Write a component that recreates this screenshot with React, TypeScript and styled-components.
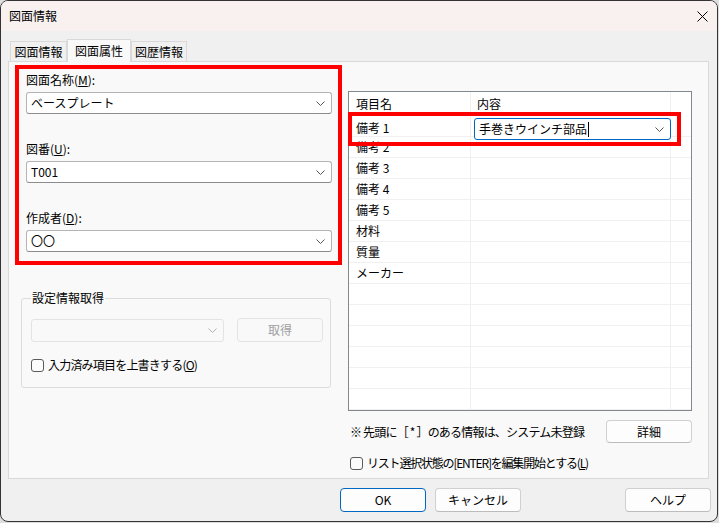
import React from 'react';
import styled, { createGlobalStyle } from 'styled-components';

const GlobalStyle = createGlobalStyle`
    html, body {
        margin: 0;
        padding: 0;
        background: #dedede;
    }
    body {
        font-family: "Noto Sans CJK JP", "Noto Sans", sans-serif;
        font-size: 12px;
        color: #000;
    }
    * {
        box-sizing: border-box;
    }
`;

const Dialog = styled.div`
    width: 718px;
    height: 522px;
    border: 1px solid #333;
    border-radius: 8px;
    background: #f0f0f0;
    overflow: hidden;
    display: flex;
    flex-direction: column;
`;

const TitleBar = styled.div`
    height: 30px;
    flex-shrink: 0;
    background: #f9f1f0;
    display: flex;
    align-items: center;
    justify-content: space-between;
    padding: 0 9px 0 8px;
    line-height: 16px;
`;

const Body = styled.div`
    padding: 8px 8px 0 7px;
    display: flex;
    flex-direction: column;
`;

const TabRow = styled.div`
    display: flex;
    align-items: flex-end;
    height: 22px;
    padding-left: 2px;
`;

const Tab = styled.div<{ $active?: boolean; $width: number }>`
    position: relative;
    z-index: ${(p) => (p.$active ? 1 : 0)};
    width: ${(p) => p.$width}px;
    height: ${(p) => (p.$active ? 23 : 20)}px;
    margin-bottom: ${(p) => (p.$active ? -1 : 0)}px;
    border: 1px solid #d9d9d9;
    border-bottom: none;
    background: ${(p) => (p.$active ? '#f9f9f9' : '#f0f0f0')};
    display: flex;
    align-items: center;
    justify-content: center;
    line-height: 16px;
    padding-top: ${(p) => (p.$active ? 0 : 1)}px;
`;

const Panel = styled.div`
    height: 418px;
    border: 1px solid #d9d9d9;
    background: #f9f9f9;
    display: flex;
    padding: 3px 0 0 6px;
`;

const LeftColumn = styled.div`
    width: 327px;
    display: flex;
    flex-direction: column;
`;

const RedFrame = styled.div`
    border: 4px solid #ff0000;
    padding: 3px 6px 9px 7px;
    display: flex;
    flex-direction: column;
    gap: 27px;
`;

const Field = styled.div`
    display: flex;
    flex-direction: column;
`;

const FieldLabel = styled.div`
    line-height: 16px;
    height: 16px;
    margin-bottom: 4px;
`;

const Combo = styled.div<{ $disabled?: boolean; $focused?: boolean; $width?: number; $height?: number }>`
    position: relative;
    z-index: 1;
    width: ${(p) => (p.$width ? `${p.$width}px` : '100%')};
    height: ${(p) => p.$height ?? 22}px;
    flex-shrink: 0;
    border: 1px solid ${(p) => (p.$focused ? '#0067c0' : p.$disabled ? '#e3e3e3' : '#b4b4b4')};
    border-bottom-color: ${(p) => (p.$focused ? '#0067c0' : p.$disabled ? '#e3e3e3' : '#8c8c8c')};
    border-radius: 3px;
    background: ${(p) => (p.$disabled ? '#f9f9f9' : '#fff')};
    display: flex;
    align-items: center;
    justify-content: space-between;
    padding: 0 6px 0 4px;
    line-height: 16px;
`;

const ComboText = styled.span`
    display: flex;
    align-items: center;
    white-space: nowrap;
`;

const Caret = styled.span`
    display: inline-block;
    width: 1px;
    height: 15px;
    background: #000;
    margin-left: 1px;
`;

const GroupBox = styled.fieldset`
    margin: 25px 0 0 6px;
    width: 310px;
    padding: 0 8px 14px 9px;
    border: 1px solid #dcdcdc;
    border-radius: 3px;
    min-width: 0;
`;

const Legend = styled.legend`
    padding: 0 1px;
    line-height: 16px;
    font-size: 12px;
`;

const GroupRow = styled.div`
    display: flex;
    align-items: flex-end;
    gap: 13px;
    margin-top: 12px;
`;

const CheckRow = styled.label<{ $top: number; $indent?: number }>`
    display: flex;
    align-items: center;
    gap: 4px;
    margin-top: ${(p) => p.$top}px;
    padding-left: ${(p) => p.$indent ?? 0}px;
    line-height: 16px;
    white-space: nowrap;
`;

const CheckBox = styled.span`
    width: 13px;
    height: 13px;
    border: 1px solid #5a5a5a;
    border-radius: 3px;
    background: #fcfcfc;
    flex-shrink: 0;
`;

const Tight = styled.span<{ $spacing: number }>`
    letter-spacing: ${(p) => p.$spacing}px;
`;

const RightColumn = styled.div`
    margin-left: 6px;
    width: 344px;
    display: flex;
    flex-direction: column;
    padding-top: 26px;
`;

const TableBox = styled.div`
    position: relative;
    height: 320px;
    border: 1px solid #828790;
    background: #fff;
`;

const GridRow = styled.div<{ $header?: boolean }>`
    display: grid;
    grid-template-columns: 122px 200px 1fr;
    height: ${(p) => (p.$header ? 24 : 21)}px;
    border-bottom: ${(p) => (p.$header ? 'none' : '1px solid #f0f0f0')};
`;

const Cell = styled.div<{ $pad?: number; $last?: boolean }>`
    border-right: ${(p) => (p.$last ? 'none' : '1px solid #f0f0f0')};
    padding-left: ${(p) => p.$pad ?? 7}px;
    display: flex;
    align-items: center;
    line-height: 16px;
    white-space: nowrap;
`;

const HighlightBox = styled.div`
    position: absolute;
    left: -1px;
    top: 20px;
    width: 333px;
    height: 34px;
    border: 4px solid #ff0000;
    pointer-events: none;
    z-index: 2;
`;

const NoteRow = styled.div`
    display: flex;
    align-items: center;
    justify-content: space-between;
    margin-top: 9px;
    padding-left: 2px;
    line-height: 16px;
    white-space: nowrap;
`;

const Button = styled.button<{ $primary?: boolean; $disabled?: boolean; $height?: number }>`
    width: 86px;
    height: ${(p) => p.$height ?? 24}px;
    flex-shrink: 0;
    border: 1px solid ${(p) => (p.$primary ? '#0067c0' : p.$disabled ? '#e3e3e3' : '#d0d0d0')};
    border-bottom-color: ${(p) => (p.$primary ? '#0067c0' : p.$disabled ? '#e3e3e3' : '#bcbcbc')};
    border-radius: 4px;
    background: ${(p) => (p.$disabled ? '#f9f9f9' : '#fdfdfd')};
    color: ${(p) => (p.$disabled ? '#a0a0a0' : '#000')};
    font-family: inherit;
    font-size: 12px;
    line-height: 16px;
    padding: 0;
`;

const Footer = styled.div`
    display: flex;
    gap: 9px;
    padding: 9px 6px 0 339px;
`;

const HelpButton = styled(Button)`
    margin-left: auto;
`;

const Chevron: React.FC<{ color?: string }> = ({ color = '#555' }) => (
    <svg width="9" height="5" viewBox="0 0 9 5">
        <polyline points="0.5,0.5 4.5,4.5 8.5,0.5" fill="none" stroke={color} strokeWidth="1" />
    </svg>
);

const CloseIcon: React.FC = () => (
    <svg width="11" height="11" viewBox="0 0 11 11">
        <line x1="0.5" y1="0.5" x2="10.5" y2="10.5" stroke="#000" strokeWidth="1" />
        <line x1="10.5" y1="0.5" x2="0.5" y2="10.5" stroke="#000" strokeWidth="1" />
    </svg>
);

const rows = ['備考 1', '備考 2', '備考 3', '備考 4', '備考 5', '材料', '質量', 'メーカー', '', '', '', '', '', ''];

const App: React.FC = () => {
    return (
        <>
            <GlobalStyle />
            <Dialog>
                <TitleBar>
                    <span>図面情報</span>
                    <CloseIcon />
                </TitleBar>
                <Body>
                    <TabRow>
                        <Tab $width={57}>図面情報</Tab>
                        <Tab $width={64} $active>図面属性</Tab>
                        <Tab $width={56}>図歴情報</Tab>
                    </TabRow>
                    <Panel>
                        <LeftColumn>
                            <RedFrame>
                                <Field>
                                    <FieldLabel>図面名称(<u>M</u>):</FieldLabel>
                                    <Combo>
                                        <ComboText>ベースプレート</ComboText>
                                        <Chevron />
                                    </Combo>
                                </Field>
                                <Field>
                                    <FieldLabel>図番(<u>U</u>):</FieldLabel>
                                    <Combo>
                                        <ComboText>T001</ComboText>
                                        <Chevron />
                                    </Combo>
                                </Field>
                                <Field>
                                    <FieldLabel>作成者(<u>D</u>):</FieldLabel>
                                    <Combo>
                                        <ComboText>〇〇</ComboText>
                                        <Chevron />
                                    </Combo>
                                </Field>
                            </RedFrame>
                            <GroupBox>
                                <Legend>設定情報取得</Legend>
                                <GroupRow>
                                    <Combo $disabled $width={193} $height={23}>
                                        <ComboText />
                                        <Chevron color="#b0b0b0" />
                                    </Combo>
                                    <Button $disabled>取得</Button>
                                </GroupRow>
                                <CheckRow $top={15}>
                                    <CheckBox />
                                    <Tight $spacing={-0.8}>入力済み項目を上書きする(<u>O</u>)</Tight>
                                </CheckRow>
                            </GroupBox>
                        </LeftColumn>
                        <RightColumn>
                            <TableBox>
                                <GridRow $header>
                                    <Cell>項目名</Cell>
                                    <Cell $pad={6}>内容</Cell>
                                    <Cell $last />
                                </GridRow>
                                {rows.map((name, i) => (
                                    <GridRow key={i}>
                                        <Cell>{name}</Cell>
                                        <Cell $pad={i === 0 ? 3 : 6}>
                                            {i === 0 && (
                                                <Combo $focused $width={197} style={{ marginTop: 2 }}>
                                                    <ComboText>
                                                        手巻きウインチ部品
                                                        <Caret />
                                                    </ComboText>
                                                    <Chevron />
                                                </Combo>
                                            )}
                                        </Cell>
                                        <Cell $last />
                                    </GridRow>
                                ))}
                                <HighlightBox />
                            </TableBox>
                            <NoteRow>
                                <Tight $spacing={-0.8}>※ 先頭に［ * ］のある情報は、システム未登録</Tight>
                                <Button $height={23}>詳細</Button>
                            </NoteRow>
                            <CheckRow $top={12} $indent={2}>
                                <CheckBox />
                                <Tight $spacing={-1.2}>リスト選択状態の[ENTER]を編集開始とする(<u>L</u>)</Tight>
                            </CheckRow>
                        </RightColumn>
                    </Panel>
                </Body>
                <Footer>
                    <Button $primary>OK</Button>
                    <Button>キャンセル</Button>
                    <HelpButton>ヘルプ</HelpButton>
                </Footer>
            </Dialog>
        </>
    );
};

export default App;
